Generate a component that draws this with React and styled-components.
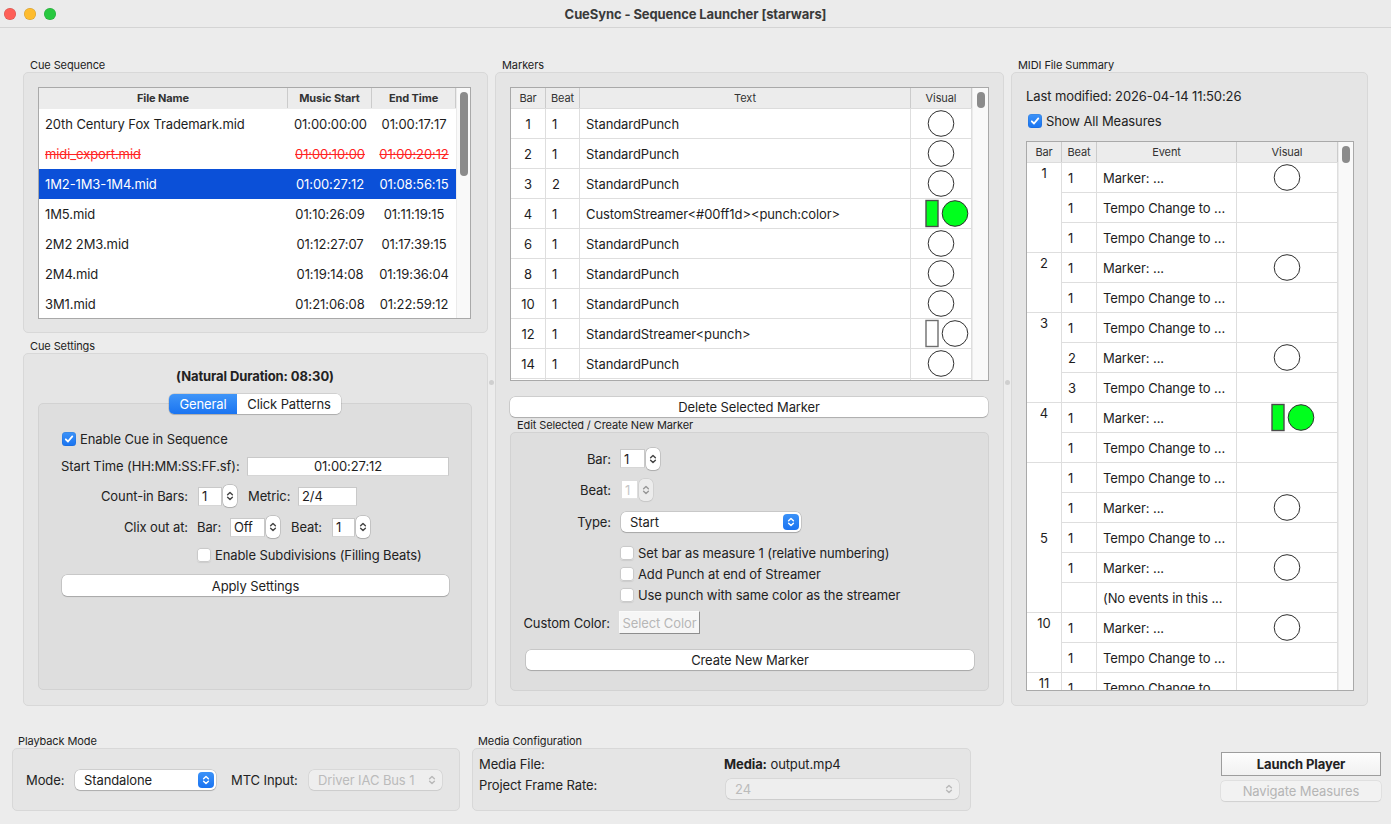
import React from 'react';
import styled, { createGlobalStyle } from 'styled-components';

const GlobalStyle = createGlobalStyle`
  * { box-sizing: border-box; }
  html, body { margin: 0; padding: 0; background: #ececec; }
  body {
    font-family: 'Inter', 'Liberation Sans', sans-serif;
    font-size: 13px;
    color: #222;
    letter-spacing: -0.1px;
  }
`;

const Window = styled.div`
  width: 1391px;
  height: 824px;
  display: flex;
  flex-direction: column;
  background: #ececec;
  overflow: hidden;
`;

const TitleBar = styled.header`
  height: 28px;
  flex: none;
  display: grid;
  grid-template-columns: 1fr auto 1fr;
  align-items: center;
  background: #ebebeb;
  border-bottom: 1px solid #d4d4d4;
`;

const Lights = styled.div`
  display: flex;
  gap: 8px;
  padding-left: 4px;
`;

const Light = styled.span`
  width: 12px;
  height: 12px;
  border-radius: 50%;
  background: ${(p) => p.$c};
  box-shadow: inset 0 0 0 0.5px rgba(0, 0, 0, 0.18);
`;

const Title = styled.div`
  font-weight: 700;
  font-size: 13px;
  color: #3a3a3a;
`;

const Main = styled.main`
  height: 678px;
  flex: none;
  display: flex;
  padding: 31px 23px 0;
`;

const Column = styled.div`
  width: ${(p) => p.$w}px;
  flex: none;
  display: flex;
  flex-direction: column;
`;

const Splitter = styled.div`
  width: 7px;
  flex: none;
  display: flex;
  align-items: center;
  justify-content: center;
  &::after {
    content: '';
    width: 5px;
    height: 5px;
    border-radius: 50%;
    background: #cfcfcf;
  }
`;

const Group = styled.section`
  display: flex;
  flex-direction: column;
  flex: ${(p) => (p.$grow ? '1 1 auto' : 'none')};
  margin-top: ${(p) => p.$mt || 0}px;
  margin-left: ${(p) => p.$ml || 0}px;
  width: ${(p) => (p.$w ? `${p.$w}px` : 'auto')};
  min-height: 0;
`;

const GroupLabel = styled.div`
  flex: none;
  height: 13px;
  font-size: 11px;
  line-height: 13px;
  padding-left: ${(p) => p.$indent ?? 7}px;
  color: #222;
  white-space: nowrap;
`;

const Box = styled.div`
  background: #e5e5e5;
  border: 1px solid #d8d8d8;
  border-radius: 5px;
  padding: ${(p) => p.$pad || '0'};
  height: ${(p) => (p.$h ? `${p.$h}px` : 'auto')};
  flex: ${(p) => (p.$h ? 'none' : '1 1 auto')};
  display: flex;
  flex-direction: ${(p) => p.$dir || 'column'};
  align-items: ${(p) => p.$align || 'stretch'};
  min-height: 0;
`;

/* ---------- tables ---------- */

const TableFrame = styled.div`
  display: flex;
  background: #fff;
  border: 1px solid #a9a9a9;
  height: ${(p) => (p.$h ? `${p.$h}px` : 'auto')};
  flex: ${(p) => (p.$h ? 'none' : '1 1 auto')};
  margin-top: ${(p) => p.$mt || 0}px;
  min-height: 0;
  overflow: hidden;
`;

const TableBody = styled.div`
  flex: 1 1 auto;
  min-width: 0;
  display: flex;
  flex-direction: column;
  overflow: hidden;
`;

const HeadRow = styled.div`
  flex: none;
  display: grid;
  grid-template-columns: ${(p) => p.$cols};
  height: 21px;
  background: #ececec;
  border-bottom: 1px solid ${(p) => (p.$line ? '#dcdcdc' : '#ececec')};
`;

const HeadCell = styled.div`
  display: flex;
  align-items: center;
  justify-content: center;
  font-size: 11px;
  font-weight: ${(p) => (p.$bold ? 700 : 400)};
  color: #333;
  border-right: 1px solid #cbcbcb;
  white-space: nowrap;
`;

const ScrollTrack = styled.div`
  width: ${(p) => p.$w}px;
  flex: none;
  background: #f9f9f9;
  border-left: 1px solid #ebebeb;
  padding-top: 4px;
  display: flex;
  justify-content: center;
`;

const Thumb = styled.div`
  width: 8px;
  height: ${(p) => p.$h}px;
  border-radius: 4px;
  background: #8b8b8b;
`;

const CueRow = styled.div`
  flex: none;
  display: grid;
  grid-template-columns: ${(p) => p.$cols};
  height: 30px;
  align-items: center;
  background: ${(p) => (p.$selected ? '#0b50d8' : '#fff')};
  color: ${(p) => (p.$selected ? '#fff' : p.$off ? '#ff2424' : '#1d1d1d')};
  text-decoration: ${(p) => (p.$off ? 'line-through' : 'none')};
`;

const CueCell = styled.div`
  padding: 0 6px;
  text-align: ${(p) => p.$align || 'left'};
  white-space: nowrap;
  overflow: hidden;
`;

const Grid = styled.div`
  display: grid;
  grid-template-columns: ${(p) => p.$cols};
  grid-auto-rows: 30px;
`;

const GridCell = styled.div`
  display: flex;
  align-items: center;
  justify-content: ${(p) => (p.$center ? 'center' : 'flex-start')};
  padding: ${(p) => (p.$center ? '0' : '0 6px')};
  border-right: 1px solid #dedede;
  border-bottom: 1px solid #dedede;
  white-space: nowrap;
  overflow: hidden;
  color: #1d1d1d;
`;

const BarCell = styled.div`
  grid-column: 1;
  grid-row: span ${(p) => p.$span};
  display: flex;
  justify-content: center;
  align-items: ${(p) => (p.$middle ? 'center' : 'flex-start')};
  padding-top: ${(p) => (p.$middle ? 0 : 2)}px;
  border-right: 1px solid #dedede;
  border-bottom: 1px solid #dedede;
  color: #1d1d1d;
`;

/* ---------- controls ---------- */

const Button = styled.div`
  height: ${(p) => p.$h || 20}px;
  margin: ${(p) => p.$m || '0'};
  flex: none;
  display: flex;
  align-items: center;
  justify-content: center;
  background: #fff;
  border-radius: 5px;
  box-shadow: 0 0 0 0.5px rgba(0, 0, 0, 0.2), 0 1px 1px rgba(0, 0, 0, 0.16);
  color: #1d1d1d;
`;

const CheckSquare = styled.span`
  width: 14px;
  height: 14px;
  flex: none;
  border-radius: 3.5px;
  display: inline-flex;
  align-items: center;
  justify-content: center;
  background: ${(p) => (p.$on ? 'linear-gradient(#3d93f8, #1873f1)' : '#fff')};
  box-shadow: ${(p) =>
    p.$on ? 'inset 0 0 0 0.5px rgba(0,0,0,.1)' : 'inset 0 0 0 1px #cacaca, 0 0.5px 1px rgba(0,0,0,.08)'};
`;

const CheckRow = styled.div`
  display: flex;
  align-items: center;
  gap: 4px;
  height: ${(p) => p.$h || 21}px;
  padding-left: ${(p) => p.$indent || 0}px;
  margin-top: ${(p) => p.$mt || 0}px;
  flex: none;
  white-space: nowrap;
`;

const Check = ({ on, children, ...rest }) => (
  <CheckRow {...rest}>
    <CheckSquare $on={on}>
      {on && (
        <svg width="10" height="10" viewBox="0 0 10 10">
          <path d="M1.8 5.3 L4 7.5 L8.3 2.4" fill="none" stroke="#fff" strokeWidth="1.8" strokeLinecap="round" strokeLinejoin="round" />
        </svg>
      )}
    </CheckSquare>
    <span>{children}</span>
  </CheckRow>
);

const Chevrons = ({ color = '#fff', h = 12 }) => (
  <svg width="8" height={h} viewBox={`0 0 8 ${h}`}>
    <path d={`M1.6 ${h / 2 - 1.2} L4 ${h / 2 - 3.6} L6.4 ${h / 2 - 1.2}`} fill="none" stroke={color} strokeWidth="1.4" strokeLinecap="round" strokeLinejoin="round" />
    <path d={`M1.6 ${h / 2 + 1.2} L4 ${h / 2 + 3.6} L6.4 ${h / 2 + 1.2}`} fill="none" stroke={color} strokeWidth="1.4" strokeLinecap="round" strokeLinejoin="round" />
  </svg>
);

const Field = styled.div`
  width: ${(p) => (p.$w ? `${p.$w}px` : 'auto')};
  flex: ${(p) => (p.$w ? 'none' : '1 1 auto')};
  height: 19px;
  margin-left: ${(p) => p.$ml || 0}px;
  display: flex;
  align-items: center;
  justify-content: ${(p) => (p.$center ? 'center' : 'flex-start')};
  padding: 0 3px;
  background: #fff;
  border: 1px solid ${(p) => (p.$disabled ? '#dddddd' : '#c9c9c9')};
  border-bottom-color: ${(p) => (p.$disabled ? '#e2e2e2' : '#d6d6d6')};
  color: ${(p) => (p.$disabled ? '#c6c6c6' : '#1d1d1d')};
`;

const SpinWrap = styled.div`
  display: flex;
  align-items: center;
  gap: 1px;
  margin-left: ${(p) => p.$ml || 0}px;
  flex: none;
`;

const SpinArrows = styled.div`
  width: 14px;
  height: 22px;
  border-radius: 5px;
  background: #fff;
  box-shadow: 0 0 0 0.5px rgba(0, 0, 0, 0.22), 0 0.5px 1px rgba(0, 0, 0, 0.12);
  display: flex;
  align-items: center;
  justify-content: center;
  opacity: ${(p) => (p.$disabled ? 0.45 : 1)};
`;

const Spin = ({ value, w, disabled, ml }) => (
  <SpinWrap $ml={ml}>
    <Field $w={w} $disabled={disabled}>{value}</Field>
    <SpinArrows $disabled={disabled}>
      <Chevrons color="#444" h={18} />
    </SpinArrows>
  </SpinWrap>
);

const ComboBox = styled.div`
  width: ${(p) => p.$w}px;
  height: 20px;
  flex: none;
  margin-left: ${(p) => p.$ml || 0}px;
  margin-top: ${(p) => p.$mt || 0}px;
  display: flex;
  align-items: center;
  justify-content: space-between;
  padding: 0 2px 0 9px;
  border-radius: 5px;
  background: ${(p) => (p.$disabled ? '#eeeeee' : '#fff')};
  color: ${(p) => (p.$disabled ? '#bbbbbb' : '#1d1d1d')};
  box-shadow: ${(p) =>
    p.$disabled
      ? '0 0 0 0.5px rgba(0,0,0,.1), 0 0.5px 1px rgba(0,0,0,.06)'
      : '0 0 0 0.5px rgba(0,0,0,.2), 0 1px 1px rgba(0,0,0,.16)'};
  white-space: nowrap;
`;

const ComboArrow = styled.span`
  width: 16px;
  height: 16px;
  border-radius: 4px;
  display: flex;
  align-items: center;
  justify-content: center;
  background: ${(p) => (p.$disabled ? 'transparent' : 'linear-gradient(#3b92f8, #1a73f1)')};
`;

const Combo = ({ value, w, disabled, ml, mt }) => (
  <ComboBox $w={w} $disabled={disabled} $ml={ml} $mt={mt}>
    <span>{value}</span>
    <ComboArrow $disabled={disabled}>
      <Chevrons color={disabled ? '#b9b9b9' : '#fff'} />
    </ComboArrow>
  </ComboBox>
);

/* ---------- cue settings ---------- */

const Duration = styled.div`
  flex: none;
  text-align: center;
  font-weight: 700;
  line-height: 16px;
`;

const TabBar = styled.div`
  flex: none;
  display: flex;
  justify-content: center;
  margin: 10px 0 -11px;
  position: relative;
  z-index: 1;
`;

const Tabs = styled.div`
  display: flex;
  border-radius: 5px;
  overflow: hidden;
  box-shadow: 0 0 0 0.5px rgba(0, 0, 0, 0.18), 0 1px 1px rgba(0, 0, 0, 0.14);
`;

const Tab = styled.div`
  width: ${(p) => p.$w}px;
  height: 20px;
  display: flex;
  align-items: center;
  justify-content: center;
  background: ${(p) => (p.$active ? 'linear-gradient(#3f95f8, #1a74f1)' : '#fff')};
  color: ${(p) => (p.$active ? '#fff' : '#1d1d1d')};
`;

const Pane = styled.div`
  flex: 1 1 auto;
  background: #dedede;
  border: 1px solid #d2d2d2;
  border-radius: 5px;
  padding: ${(p) => p.$pad};
  display: flex;
  flex-direction: column;
  min-height: 0;
`;

const FormRow = styled.div`
  flex: none;
  height: ${(p) => p.$h}px;
  display: flex;
  align-items: center;
  white-space: nowrap;
`;

const Label = styled.span`
  width: ${(p) => (p.$w ? `${p.$w}px` : 'auto')};
  flex: none;
  text-align: ${(p) => (p.$right ? 'right' : 'left')};
  margin-left: ${(p) => p.$ml || 0}px;
  margin-right: ${(p) => p.$mr || 0}px;
  margin-top: ${(p) => p.$mt || 0}px;
  white-space: nowrap;
`;

const InfoLine = styled.div`
  flex: none;
  height: 18px;
  line-height: 18px;
`;

/* ---------- markers ---------- */

const SubLabel = styled.div`
  flex: none;
  height: 15px;
  padding: 2px 0 0 7px;
  font-size: 11px;
  line-height: 13px;
`;

const ColorButton = styled.div`
  width: 81px;
  height: 23px;
  flex: none;
  display: flex;
  align-items: center;
  justify-content: center;
  background: #f6f6f6;
  border: 1px solid #fafafa;
  border-right: 1.5px solid #8e8e8e;
  border-bottom: 1.5px solid #8e8e8e;
  color: #b7b7b7;
`;

/* ---------- bottom ---------- */

const Bottom = styled.footer`
  flex: 1 1 auto;
  display: flex;
  align-items: flex-start;
  padding: 29px 10px 0 12px;
`;

const MediaGrid = styled.div`
  display: grid;
  grid-template-columns: 245px 1fr;
  align-items: start;
  padding: 7px 0 0 6px;
  line-height: 16px;
`;

const Actions = styled.div`
  margin-left: auto;
  margin-top: 17px;
  width: 160px;
  display: flex;
  flex-direction: column;
  gap: 5px;
`;

const LaunchButton = styled.div`
  height: 24px;
  display: flex;
  align-items: center;
  justify-content: center;
  font-weight: 700;
  color: #222;
  background: linear-gradient(#fdfdfd, #f1f1f1);
  border: 1px solid #9d9d9d;
`;

const GhostButton = styled.div`
  height: 20px;
  display: flex;
  align-items: center;
  justify-content: center;
  color: #b5b5b5;
  background: #f2f2f2;
  border-radius: 4px;
  box-shadow: 0 0 0 0.5px rgba(0, 0, 0, 0.08), 0 0.5px 1px rgba(0, 0, 0, 0.08);
`;

/* ---------- visual marks ---------- */

const Visual = ({ kind, c }) => {
  if (!kind) return null;
  if (kind === 'punch') {
    return (
      <svg width={c * 2} height="29">
        <circle cx={c} cy="14.5" r="12.8" fill="#fff" stroke="#2e2e2e" strokeWidth="1" />
      </svg>
    );
  }
  const fill = kind === 'color' ? '#00ff1d' : '#fff';
  const edge = kind === 'color' ? '#4b4b4b' : '#6e6e6e';
  return (
    <svg width={c * 2} height="29">
      <rect x={c - 15} y="1.5" width="12" height="26" fill={fill} stroke={edge} strokeWidth="1.4" />
      <circle cx={c + 14} cy="14.5" r="12.8" fill={fill} stroke="#2e2e2e" strokeWidth="1" />
    </svg>
  );
};

/* ---------- data ---------- */

const cueCols = '249px 84px 84px';
const cueRows = [
  { name: '20th Century Fox Trademark.mid', start: '01:00:00:00', end: '01:00:17:17' },
  { name: 'midi_export.mid', start: '01:00:10:00', end: '01:00:20:12', off: true },
  { name: '1M2-1M3-1M4.mid', start: '01:00:27:12', end: '01:08:56:15', selected: true },
  { name: '1M5.mid', start: '01:10:26:09', end: '01:11:19:15' },
  { name: '2M2 2M3.mid', start: '01:12:27:07', end: '01:17:39:15' },
  { name: '2M4.mid', start: '01:19:14:08', end: '01:19:36:04' },
  { name: '3M1.mid', start: '01:21:06:08', end: '01:22:59:12' },
];

const markerCols = '35px 34px 331px 61px';
// the last row only peeks in below the fold: its circle top shows, no text
const markers = [
  ['1', '1', 'StandardPunch', 'punch'],
  ['2', '1', 'StandardPunch', 'punch'],
  ['3', '2', 'StandardPunch', 'punch'],
  ['4', '1', 'CustomStreamer<#00ff1d><punch:color>', 'color'],
  ['6', '1', 'StandardPunch', 'punch'],
  ['8', '1', 'StandardPunch', 'punch'],
  ['10', '1', 'StandardPunch', 'punch'],
  ['12', '1', 'StandardStreamer<punch>', 'streamer'],
  ['14', '1', 'StandardPunch', 'punch'],
  ['', '', '', 'punch'],
];

const midiCols = '35px 35px 140px 101px';
const TEMPO = 'Tempo Change to ...';
const MARK = 'Marker: ...';
const midiBars = [
  { bar: '1', events: [['1', MARK, 'punch'], ['1', TEMPO], ['1', TEMPO]] },
  { bar: '2', events: [['1', MARK, 'punch'], ['1', TEMPO]] },
  { bar: '3', events: [['1', TEMPO], ['2', MARK, 'punch'], ['3', TEMPO]] },
  { bar: '4', events: [['1', MARK, 'color'], ['1', TEMPO]] },
  {
    bar: '5',
    middle: true,
    events: [['1', TEMPO], ['1', MARK, 'punch'], ['1', TEMPO], ['1', MARK, 'punch'], ['', '(No events in this ...']],
  },
  { bar: '10', events: [['1', MARK, 'punch'], ['1', TEMPO]] },
  { bar: '11', events: [['1', TEMPO]] },
];

/* ---------- sections ---------- */

const CueSequence = () => (
  <Group>
    <GroupLabel>Cue Sequence</GroupLabel>
    <Box $h={261} $pad="14px 16px 13px 14px">
      <TableFrame $h={232}>
        <TableBody>
          <HeadRow $cols={cueCols}>
            <HeadCell $bold>File Name</HeadCell>
            <HeadCell $bold>Music Start</HeadCell>
            <HeadCell $bold>End Time</HeadCell>
          </HeadRow>
          {cueRows.map((r) => (
            <CueRow key={r.name} $cols={cueCols} $selected={r.selected} $off={r.off}>
              <CueCell>{r.name}</CueCell>
              <CueCell $align="center">{r.start}</CueCell>
              <CueCell $align="center">{r.end}</CueCell>
            </CueRow>
          ))}
        </TableBody>
        <ScrollTrack $w={14}>
          <Thumb $h={84} />
        </ScrollTrack>
      </TableFrame>
    </Box>
  </Group>
);

const CueSettings = () => (
  <Group $grow $mt={7}>
    <GroupLabel>Cue Settings</GroupLabel>
    <Box $pad="14px 15px 15px 14px">
      <Duration>(Natural Duration: 08:30)</Duration>
      <TabBar>
        <Tabs>
          <Tab $w={68} $active>General</Tab>
          <Tab $w={104}>Click Patterns</Tab>
        </Tabs>
      </TabBar>
      <Pane $pad="22px 22px 0 22px">
        <Check on $h={26} $indent={1}>Enable Cue in Sequence</Check>
        <FormRow $h={28}>
          <Label $w={186}>Start Time (HH:MM:SS:FF.sf):</Label>
          <Field $center>01:00:27:12</Field>
        </FormRow>
        <FormRow $h={32}>
          <Label $w={127} $right>Count-in Bars:</Label>
          <Spin value="1" w={24} ml={10} />
          <Label $w={42} $ml={11}>Metric:</Label>
          <Field $w={59} $ml={8}>2/4</Field>
        </FormRow>
        <FormRow $h={30}>
          <Label $w={127} $right>Clix out at:</Label>
          <Label $w={23} $ml={9}>Bar:</Label>
          <Spin value="Off" w={35} ml={10} />
          <Label $w={31} $ml={11}>Beat:</Label>
          <Spin value="1" w={23} ml={10} />
        </FormRow>
        <Check $h={26} $indent={136}>Enable Subdivisions (Filling Beats)</Check>
        <Button $h={21} $m="7px 0 0 1px">Apply Settings</Button>
      </Pane>
    </Box>
  </Group>
);

const Markers = () => (
  <Group $grow>
    <GroupLabel>Markers</GroupLabel>
    <Box $pad="14px 14px 14px 14px">
      <TableFrame $h={294}>
        <TableBody>
          <HeadRow $cols={markerCols} $line>
            <HeadCell>Bar</HeadCell>
            <HeadCell>Beat</HeadCell>
            <HeadCell>Text</HeadCell>
            <HeadCell>Visual</HeadCell>
          </HeadRow>
          <Grid $cols={markerCols}>
            {markers.map(([bar, beat, text, kind], i) => (
              <React.Fragment key={i}>
                <GridCell $center>{bar}</GridCell>
                <GridCell>{beat}</GridCell>
                <GridCell>{text}</GridCell>
                <GridCell $center>
                  <Visual kind={kind} c={30} />
                </GridCell>
              </React.Fragment>
            ))}
          </Grid>
        </TableBody>
        <ScrollTrack $w={16}>
          <Thumb $h={16} />
        </ScrollTrack>
      </TableFrame>
      <Button $m="16px 1px 0 0">Delete Selected Marker</Button>
      <SubLabel>Edit Selected / Create New Marker</SubLabel>
      <Pane $pad="10px 0 0 0">
        <FormRow $h={31}>
          <Label $w={100} $right>Bar:</Label>
          <Spin value="1" w={25} ml={9} />
        </FormRow>
        <FormRow $h={31}>
          <Label $w={100} $right>Beat:</Label>
          <Spin value="1" w={17} ml={10} disabled />
        </FormRow>
        <FormRow $h={34}>
          <Label $w={100} $right>Type:</Label>
          <Combo value="Start" w={180} ml={10} />
        </FormRow>
        <Check $indent={109} $mt={3}>Set bar as measure 1 (relative numbering)</Check>
        <Check $indent={109}>Add Punch at end of Streamer</Check>
        <Check $indent={109}>Use punch with same color as the streamer</Check>
        <FormRow $h={35}>
          <Label $w={99} $right>Custom Color:</Label>
          <Label $ml={9}>
            <ColorButton>Select Color</ColorButton>
          </Label>
        </FormRow>
        <Button $m="10px 14px 0 15px">Create New Marker</Button>
      </Pane>
    </Box>
  </Group>
);

const MidiSummary = () => (
  <Group $grow>
    <GroupLabel>MIDI File Summary</GroupLabel>
    <Box $pad="14px 13px 14px 14px">
      <InfoLine>Last modified: 2026-04-14 11:50:26</InfoLine>
      <Check on $h={24} $mt={4} $indent={2}>Show All Measures</Check>
      <TableFrame $mt={8}>
        <TableBody>
          <HeadRow $cols={midiCols} $line>
            <HeadCell>Bar</HeadCell>
            <HeadCell>Beat</HeadCell>
            <HeadCell>Event</HeadCell>
            <HeadCell>Visual</HeadCell>
          </HeadRow>
          <Grid $cols={midiCols}>
            {midiBars.map((b) => (
              <React.Fragment key={b.bar}>
                <BarCell $span={b.events.length} $middle={b.middle}>{b.bar}</BarCell>
                {b.events.map(([beat, text, kind], i) => (
                  <React.Fragment key={i}>
                    <GridCell>{beat}</GridCell>
                    <GridCell>{text}</GridCell>
                    <GridCell $center>
                      <Visual kind={kind} c={50} />
                    </GridCell>
                  </React.Fragment>
                ))}
              </React.Fragment>
            ))}
          </Grid>
        </TableBody>
        <ScrollTrack $w={15}>
          <Thumb $h={17} />
        </ScrollTrack>
      </TableFrame>
    </Box>
  </Group>
);

export default function App() {
  return (
    <Window>
      <GlobalStyle />
      <TitleBar>
        <Lights>
          <Light $c="#fe5f57" />
          <Light $c="#febc2e" />
          <Light $c="#28c840" />
        </Lights>
        <Title>CueSync - Sequence Launcher [starwars]</Title>
        <div />
      </TitleBar>

      <Main>
        <Column $w={465}>
          <CueSequence />
          <CueSettings />
        </Column>
        <Splitter />
        <Column $w={509}>
          <Markers />
        </Column>
        <Splitter />
        <Column $w={357}>
          <MidiSummary />
        </Column>
      </Main>

      <Bottom>
        <Group $w={448}>
          <GroupLabel $indent={6}>Playback Mode</GroupLabel>
          <Box $h={63} $dir="row" $align="center" $pad="0 0 0 13px">
            <Label $w={49}>Mode:</Label>
            <Combo value="Standalone" w={141} />
            <Label $w={78} $ml={15}>MTC Input:</Label>
            <Combo value="Driver IAC Bus 1" w={133} disabled />
          </Box>
        </Group>
        <Group $w={499} $ml={12}>
          <GroupLabel $indent={6}>Media Configuration</GroupLabel>
          <Box $h={63}>
            <MediaGrid>
              <Label>Media File:</Label>
              <Label>
                <b>Media:</b> output.mp4
              </Label>
              <Label $mt={5}>Project Frame Rate:</Label>
              <Combo value="24" w={233} ml={2} mt={7} disabled />
            </MediaGrid>
          </Box>
        </Group>
        <Actions>
          <LaunchButton>Launch Player</LaunchButton>
          <GhostButton>Navigate Measures</GhostButton>
        </Actions>
      </Bottom>
    </Window>
  );
}
